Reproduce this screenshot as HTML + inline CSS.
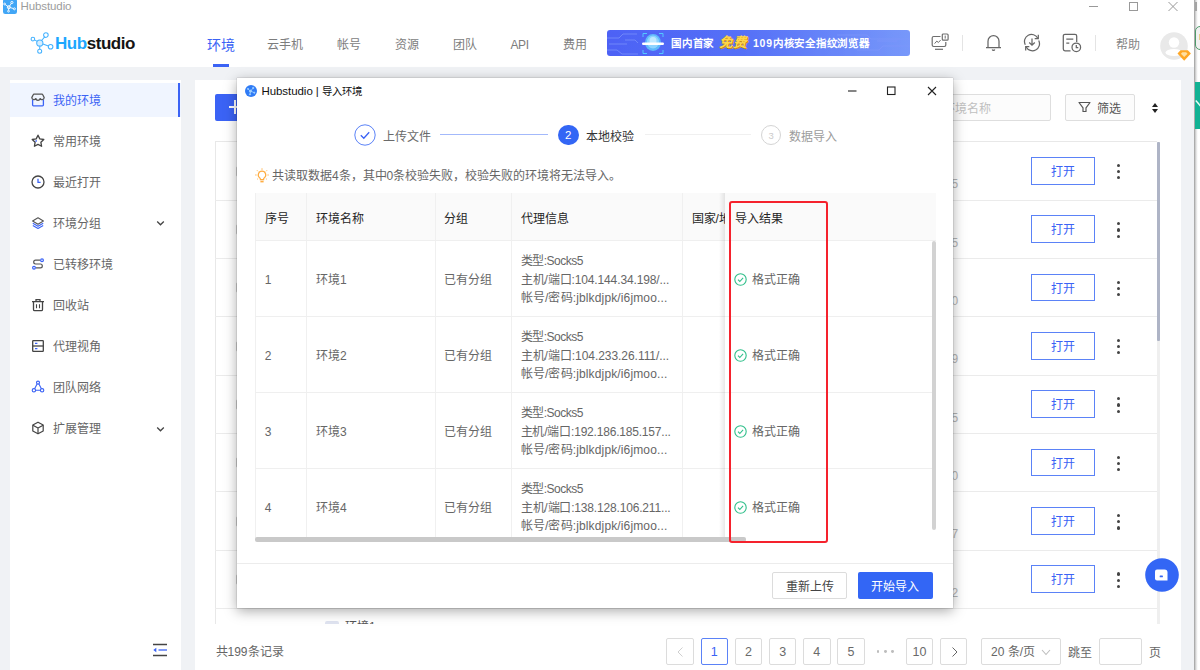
<!DOCTYPE html>
<html lang="zh-CN">
<head>
<meta charset="utf-8">
<title>Hubstudio</title>
<style>
*{box-sizing:border-box;margin:0;padding:0}
html,body{width:1200px;height:670px;overflow:hidden;background:#fff}
body{font-family:"Liberation Sans",sans-serif;font-size:12px;color:#333;position:relative}
.abs{position:absolute;white-space:nowrap}
#app{position:absolute;left:0;top:0;width:1194px;height:670px;background:#f0f2f5;overflow:hidden}
#titlebar{position:absolute;left:0;top:0;width:1194px;height:15px;background:#fff}
#header{position:absolute;left:0;top:15px;width:1194px;height:51.500px;background:#fff}
.nav{position:absolute;top:20.700px;font-size:12px;color:#7d7d7d;line-height:18px;white-space:nowrap}
.nav.on{color:#3b63f5}
#side{position:absolute;left:10px;top:80px;width:170.500px;height:590px;background:#fff}
.si{position:absolute;left:0;width:170.500px;height:34px}
.si span{position:absolute;left:43px;top:8.700px;font-size:12px;line-height:18px;color:#666;white-space:nowrap}
.si svg{position:absolute;left:20.500px;top:9.500px}
#main{position:absolute;left:195px;top:80px;width:986px;height:590px;background:#fff}
.row{position:absolute;left:215px;width:942px;height:1px;background:#ebebeb}
.open{position:absolute;left:1031px;width:64px;height:27.700px;border:1px solid #5b82f7;color:#3b63f5;font-size:12px;line-height:28.500px;text-align:center;background:#fff}
.dots{position:absolute;left:1117px;width:4px}
.dots i{display:block;width:3.200px;height:3.200px;border-radius:50%;background:#444;margin-bottom:3px}
.num{position:absolute;left:951.500px;font-size:12px;line-height:14px;color:#b4b4b4}
.pg{position:absolute;top:638.300px;width:27.500px;height:27px;border:1px solid #dcdcdc;border-radius:2px;background:#fff;font-size:12.500px;line-height:27px;text-align:center;color:#6a6a6a}
#dlg{position:absolute;left:237px;top:78px;width:716px;height:529.500px;background:#fff;box-shadow:0 3px 12px rgba(0,0,0,.34),0 0 1px rgba(0,0,0,.4)}
#dlg .t{position:absolute;white-space:nowrap;font-size:12px;line-height:18px;color:#666}
</style>
</head>
<body>
<div id="app">
<div id="titlebar">
<svg class="abs" style="left:2.700px;top:0" width="14" height="14" viewBox="0 0 14 14"><rect x="0" y="-1" width="14" height="15" rx="2.200" fill="#41a6f6"/><g stroke="#fff" stroke-width=".9" fill="none"><path d="M5.800 7.200L1.800 4.200M5.800 7.200L8.600 3M5.800 7.200L11 8.700M5.800 7.200L5.500 10.800"/></g><g fill="#41a6f6" stroke="#fff" stroke-width=".9"><circle cx="5.800" cy="7.200" r="1.500" fill="#a9d8fb"/><circle cx="1.600" cy="4" r=".9"/><circle cx="8.900" cy="2.500" r="1.100"/><circle cx="11.400" cy="8.800" r="1"/><circle cx="5.500" cy="11.200" r=".9"/></g></svg>
<div class="abs" style="left:20.500px;top:0;font-size:11.500px;line-height:13.500px;color:#9c9c9c;letter-spacing:-.1px">Hubstudio</div>
<svg class="abs" style="left:1086px;top:0" width="108" height="14" viewBox="0 0 108 14" fill="none" stroke="#999" stroke-width="1"><path d="M3 6.500h9"/><rect x="43.500" y="2.500" width="8" height="8"/><path d="M82.500 2l9 9M91.500 2l-9 9"/></svg>
</div>
<div id="header">
<svg class="abs" style="left:30px;top:17px" width="24" height="23" viewBox="0 0 24 23" fill="none" stroke="#45b2ff" stroke-width="1.050"><path d="M7.300 9.400L4.500 7.900M11.600 8.500L14.700 4.800M12.900 12L18.400 14M9.800 14.300L9.700 17.200"/><circle cx="9.800" cy="11" r="3.100" fill="#d6eeff"/><circle cx="2.900" cy="7.100" r="1.800"/><circle cx="15.900" cy="3.100" r="2.300"/><circle cx="20.600" cy="14.700" r="2.300"/><circle cx="9.700" cy="19.200" r="2"/></svg>
<div class="abs" style="left:55px;top:19px;font-size:17px;line-height:20px;font-weight:bold;letter-spacing:-0.45px;color:#151515"><span style="color:#1da7ff">Hub</span>studio</div>
<div class="nav on" style="left:207px;top:20.500px;font-size:14px">环境</div>
<div class="abs" style="left:213px;top:48.500px;width:16px;height:3px;background:#3b63f5"></div>
<div class="nav" style="left:267px">云手机</div>
<div class="nav" style="left:337px">帐号</div>
<div class="nav" style="left:395px">资源</div>
<div class="nav" style="left:453px">团队</div>
<div class="nav" style="left:510.500px;letter-spacing:-.4px">API</div>
<div class="nav" style="left:563px">费用</div>
<div id="banner" class="abs" style="left:607px;top:15px;width:302.500px;height:26px;border-radius:3px;background:linear-gradient(90deg,#4d62f6 0%,#5671f7 45%,#7898fa 100%);overflow:hidden">
<svg class="abs" style="left:0;top:0" width="303" height="26" viewBox="0 0 303 26" fill="none" stroke="#7f96fb" stroke-width="1" opacity=".7"><path d="M0 8h12l4-4h14M2 14h18M0 20h10l5 4h16M18 10h10l3 3M230 5h30l4 4h39M250 20h22l4-4h27M270 11h20"/></svg>
<svg class="abs" style="left:33px;top:2px" width="26" height="23" viewBox="0 0 26 23"><g fill="none" stroke="#53c8ff" stroke-width="1"><path d="M3 5V1.500h4M19 1.500h4V5M3 18v3.500h4M19 21.500h4V18"/></g><ellipse cx="13" cy="10.500" rx="8" ry="8.500" fill="#5fb9fb"/><ellipse cx="13" cy="10" rx="6" ry="6.500" fill="#8dd4ff"/><ellipse cx="13" cy="9" rx="3.500" ry="4" fill="#bfe9ff"/><rect x="2" y="10.500" width="22" height="2.500" rx="1.200" fill="#fff"/></svg>
<div class="abs" style="left:64px;top:5px;font-size:10.500px;line-height:16px;font-weight:bold;color:#fff;letter-spacing:0.8px">国内首家</div>
<div class="abs" style="left:112px;top:4px;font-size:13.500px;line-height:17px;font-weight:bold;font-style:italic;color:#ffd54a;letter-spacing:1px;text-shadow:1px 1px 0 #c98a12">免费</div>
<div class="abs" style="left:146px;top:5px;font-size:10.500px;line-height:16px;font-weight:bold;color:#fff;letter-spacing:0.75px">109内核安全指纹浏览器</div>
</div>
<svg class="abs" style="left:931px;top:18px" width="18" height="18" viewBox="0 0 18 18" fill="none" stroke="#6e6e6e" stroke-width="1.200"><path d="M9.500 3.500H2.600a1.400 1.400 0 0 0-1.400 1.400v7.200a1.400 1.400 0 0 0 1.400 1.400h10.800a1.400 1.400 0 0 0 1.400-1.400V9"/><path d="M4 16.300h8"/><path d="M3.600 10.600l2.200-2.500 1.600 1.400 2.200-2.400" stroke-width="1"/><rect x="11.300" y="1" width="5.800" height="6.200" rx="1"/><path d="M14.200 2.600v3" stroke-width="1"/></svg>
<div class="abs" style="left:962px;top:20px;width:1px;height:16px;background:#e4e4e4"></div>
<svg class="abs" style="left:985px;top:18px" width="17" height="19" viewBox="0 0 17 19" fill="none" stroke="#666" stroke-width="1.250"><path d="M1 14.500h15M3 14.500V8.200a5.500 5.500 0 0 1 11 0v6.300"/><path d="M7.200 16.600a1.400 1.400 0 0 0 2.600 0"/></svg>
<svg class="abs" style="left:1022px;top:18px" width="20" height="19" viewBox="0 0 20 19" fill="none" stroke="#666" stroke-width="1.250"><path d="M3.300 11.800A7 7 0 0 1 15.800 5.200M16.700 7.500A7 7 0 0 1 4.200 14"/><path d="M16.300 1.800v3.800h-3.600M3.700 17.500v-3.800h3.600"/><path d="M10 5.500v6.500M7.200 9.500L10 12.200l2.800-2.700"/></svg>
<svg class="abs" style="left:1062px;top:18px" width="20" height="20" viewBox="0 0 20 20" fill="none" stroke="#666" stroke-width="1.250"><path d="M8.500 17.800H3a1.700 1.700 0 0 1-1.700-1.700V3A1.700 1.700 0 0 1 3 1.300h10A1.700 1.700 0 0 1 14.700 3v6"/><path d="M4.300 6h7M4.300 10h3"/><circle cx="14.300" cy="14.300" r="4.300"/><path d="M14.300 12v2.500h2"/></svg>
<div class="abs" style="left:1095px;top:20px;width:1px;height:16px;background:#e4e4e4"></div>
<div class="nav" style="left:1116px;color:#858585">帮助</div>
<svg class="abs" style="left:1160px;top:17px" width="34" height="31" viewBox="0 0 34 31"><circle cx="14" cy="14" r="13.800" fill="#e9e9e9"/><circle cx="14" cy="10.500" r="5.200" fill="#fff"/><ellipse cx="14" cy="20.500" rx="8.500" ry="3.600" fill="#fff"/><path d="M20.500 18.200h7.400l3 3.300-6.700 7.200-6.700-7.200z" fill="#ffa726"/><path d="M22.300 20.200h3.800l1.400 1.500-3.300 3.300-3.300-3.300z" fill="#ffe0a3"/></svg>
</div>
<div id="side">
<div class="si" style="top:3.4px;background:#f0f5ff;"><svg width="14" height="14" viewBox="0 0 14 14" fill="none" stroke="#3b63f5" stroke-width="1.300"><path d="M1.600 6.500V12a.8.800 0 0 0 .8.800h9.200a.8.800 0 0 0 .8-.8V6.500"/><path d="M.8 4.600L2.200 1.800a1 1 0 0 1 .9-.6h7.800a1 1 0 0 1 .9.600l1.400 2.800a2.100 2.100 0 0 1-4.100.6 2.100 2.100 0 0 1-4.200 0 2.100 2.100 0 0 1-4.100-.6z" stroke="#555"/></svg><span style="color:#3b63f5">我的环境</span><i style="position:absolute;left:167.700px;top:0;width:2.200px;height:34px;background:#3b63f5"></i></div>
<div class="si" style="top:44.6px;"><svg width="14" height="14" viewBox="0 0 14 14" fill="none" stroke="#444" stroke-width="1.300" stroke-linejoin="round"><path d="M7 1.200l1.800 3.700 4 .6-2.900 2.800.7 4L7 10.400l-3.600 1.900.7-4L1.200 5.500l4-.6z"/><path d="M5.300 6.200l-.4 1.600" stroke="#3b63f5"/></svg><span style="">常用环境</span></div>
<div class="si" style="top:85.3px;"><svg width="14" height="14" viewBox="0 0 14 14" fill="none" stroke="#444" stroke-width="1.300"><circle cx="7" cy="7" r="6"/><path d="M7 3.800V7.400h2.600" stroke="#3b63f5"/></svg><span style="">最近打开</span></div>
<div class="si" style="top:126.1px;"><svg width="14" height="14" viewBox="0 0 14 14" fill="none" stroke="#3b63f5" stroke-width="1.100" stroke-linejoin="round"><path d="M7 1.800L1.600 5 7 8.200 12.400 5z" stroke="#555"/><path d="M1.800 7.300L7 10.300l5.200-3"/><path d="M1.800 9.400L7 12.400l5.200-3"/></svg><span style="">环境分组</span><svg style="left:146px;top:14px" width="9" height="7" viewBox="0 0 9 7" fill="none" stroke="#444" stroke-width="1.300"><path d="M1.200 1.500l3.300 3.300 3.300-3.300"/></svg></div>
<div class="si" style="top:167.1px;"><svg width="14" height="14" viewBox="0 0 14 14" fill="none" stroke="#555" stroke-width="1.200"><path d="M9 3.200H4.600a1.900 1.900 0 0 0 0 3.800h4.800a1.900 1.900 0 0 1 0 3.800H5"/><circle cx="11" cy="3.200" r="1.400" stroke="#3b63f5"/><circle cx="3" cy="10.800" r="1.400" stroke="#3b63f5"/></svg><span style="">已转移环境</span></div>
<div class="si" style="top:208.1px;"><svg width="14" height="14" viewBox="0 0 14 14" fill="none" stroke="#444" stroke-width="1.300"><path d="M1 3.600h12M5 3.400V1.700h4v1.700"/><path d="M2.500 3.800v7.700a1.200 1.200 0 0 0 1.200 1.200h6.600a1.200 1.200 0 0 0 1.200-1.200V3.800"/><path d="M5.500 6.200v4M8.500 6.200v4" stroke-width="1.100"/></svg><span style="">回收站</span></div>
<div class="si" style="top:249.4px;"><svg width="14" height="14" viewBox="0 0 14 14" fill="none" stroke="#444" stroke-width="1.300"><rect x="1.700" y="1.700" width="10.600" height="10.600" rx=".6"/><path d="M1.700 7h10.600"/><path d="M4 4.400h2.400M4 9.700h2.400" stroke="#3b63f5"/></svg><span style="">代理视角</span></div>
<div class="si" style="top:290.4px;"><svg width="14" height="14" viewBox="0 0 14 14" fill="none" stroke="#3b63f5" stroke-width="1.100"><path d="M7 2.200L2.800 10.200h8.400z" stroke-linejoin="round"/><circle cx="7" cy="2.600" r="1.500" fill="#fff"/><circle cx="2.900" cy="10.300" r="1.700" fill="#fff"/><circle cx="11.100" cy="10.300" r="1.700" fill="#fff"/></svg><span style="">团队网络</span></div>
<div class="si" style="top:331.6px;"><svg width="14" height="14" viewBox="0 0 14 14" fill="none" stroke="#444" stroke-width="1.200" stroke-linejoin="round"><path d="M7 1.200l5.200 2.900v5.800L7 12.800 1.800 9.900V4.100z"/><path d="M1.900 4.200L7 7l5.100-2.800M7 7v5.600"/></svg><span style="">扩展管理</span><svg style="left:146px;top:14px" width="9" height="7" viewBox="0 0 9 7" fill="none" stroke="#444" stroke-width="1.300"><path d="M1.200 1.500l3.300 3.300 3.300-3.300"/></svg></div>
<svg class="abs" style="left:141.500px;top:563.300px" width="16" height="14" viewBox="0 0 16 14" fill="none" stroke="#444" stroke-width="1.300"><path d="M1 1.500h14M1 12.500h14"/><path d="M6.500 7h8.500" stroke="#3b63f5"/><path d="M4.300 4.800v4.400L1.300 7z" fill="#3b63f5" stroke="none"/></svg>
</div>
<div id="main"></div>
<div id="mainc">
<div class="abs" style="left:215px;top:94px;width:60px;height:27px;border-radius:2px;background:#3b63f5"></div>
<div class="abs" style="left:228.500px;top:106px;width:13px;height:1.600px;background:#fff"></div><div class="abs" style="left:234.200px;top:99.500px;width:1.600px;height:14.500px;background:#fff"></div>
<div class="abs" style="left:900px;top:94px;width:151px;height:27px;border:1px solid #dedede;border-radius:2px;background:#fcfcfc"></div>
<div class="abs" style="left:943px;top:99.500px;font-size:12px;line-height:18px;color:#c0c0c0">环境名称</div>
<div class="abs" style="left:1065px;top:94px;width:69.500px;height:27px;border:1px solid #dedede;border-radius:2px;background:#fcfcfc"></div>
<svg class="abs" style="left:1078px;top:101px" width="13" height="12" viewBox="0 0 13 12" fill="none" stroke="#555" stroke-width="1.200" stroke-linejoin="round"><path d="M1 1.500h11L8 6.800v3.700H5V6.800z"/></svg>
<div class="abs" style="left:1097px;top:99.500px;font-size:12px;line-height:18px;color:#555">筛选</div>
<svg class="abs" style="left:1151.500px;top:102.500px" width="6" height="10" viewBox="0 0 6 10" fill="#222"><path d="M3 0L6 4H0zM3 10L0 6h6z"/></svg>
<div class="abs" style="left:215px;top:141.200px;width:942px;height:482.800px;border-left:1px solid #e8e8e8;border-top:1px solid #e8e8e8;overflow:hidden"></div>
<div class="row" style="top:199.5px"></div>
<div class="row" style="top:257.9px"></div>
<div class="row" style="top:316.2px"></div>
<div class="row" style="top:374.6px"></div>
<div class="row" style="top:432.9px"></div>
<div class="row" style="top:491.3px"></div>
<div class="row" style="top:549.6px"></div>
<div class="row" style="top:608.0px"></div>
<div class="open" style="top:157.0px">打开</div>
<div class="dots" style="top:163.9px"><i></i><i></i><i></i></div>
<div class="num" style="top:177.2px">5</div>
<div class="abs" style="left:236px;top:165.7px;width:11px;height:11px;border:1px solid #d0d0d0;border-radius:2px"></div>
<div class="open" style="top:215.3px">打开</div>
<div class="dots" style="top:222.2px"><i></i><i></i><i></i></div>
<div class="num" style="top:235.5px">5</div>
<div class="abs" style="left:236px;top:224.0px;width:11px;height:11px;border:1px solid #d0d0d0;border-radius:2px"></div>
<div class="open" style="top:273.7px">打开</div>
<div class="dots" style="top:280.6px"><i></i><i></i><i></i></div>
<div class="num" style="top:293.9px">0</div>
<div class="abs" style="left:236px;top:282.4px;width:11px;height:11px;border:1px solid #d0d0d0;border-radius:2px"></div>
<div class="open" style="top:332.1px">打开</div>
<div class="dots" style="top:338.9px"><i></i><i></i><i></i></div>
<div class="num" style="top:352.2px">9</div>
<div class="abs" style="left:236px;top:340.8px;width:11px;height:11px;border:1px solid #d0d0d0;border-radius:2px"></div>
<div class="open" style="top:390.4px">打开</div>
<div class="dots" style="top:397.3px"><i></i><i></i><i></i></div>
<div class="num" style="top:410.6px">5</div>
<div class="abs" style="left:236px;top:399.1px;width:11px;height:11px;border:1px solid #d0d0d0;border-radius:2px"></div>
<div class="open" style="top:448.8px">打开</div>
<div class="dots" style="top:455.6px"><i></i><i></i><i></i></div>
<div class="num" style="top:468.9px">0</div>
<div class="abs" style="left:236px;top:457.4px;width:11px;height:11px;border:1px solid #d0d0d0;border-radius:2px"></div>
<div class="open" style="top:507.1px">打开</div>
<div class="dots" style="top:514.0px"><i></i><i></i><i></i></div>
<div class="num" style="top:527.3px">7</div>
<div class="abs" style="left:236px;top:515.8px;width:11px;height:11px;border:1px solid #d0d0d0;border-radius:2px"></div>
<div class="open" style="top:565.4px">打开</div>
<div class="dots" style="top:572.4px"><i></i><i></i><i></i></div>
<div class="num" style="top:585.6px">2</div>
<div class="abs" style="left:236px;top:574.1px;width:11px;height:11px;border:1px solid #d0d0d0;border-radius:2px"></div>
<div class="abs" style="left:325px;top:620.500px;width:14px;height:3.500px;background:#dfe3f0;border-radius:2px 2px 0 0"></div>
<div class="abs" style="left:345px;top:620px;height:4px;overflow:hidden;font-size:12px;line-height:14px;color:#555">环境1</div>
<div class="abs" style="left:1157px;top:142px;width:3px;height:482px;background:#efefef"></div>
<div class="abs" style="left:1157.200px;top:142px;width:3px;height:198.500px;background:#aeb4c6;border-radius:1px"></div>
<svg class="abs" style="left:1145.300px;top:558px" width="34" height="34" viewBox="0 0 34 34"><circle cx="17" cy="17" r="16.800" fill="#3366f5"/><path d="M12 11.500h7.500a3 3 0 0 1 3 3v8h-10.500a2 2 0 0 1-2-2v-7a2 2 0 0 1 2-2z" fill="#fff"/><rect x="14.700" y="17.500" width="3.200" height="1.800" rx=".5" fill="#3366f5"/></svg>
<div class="abs" style="left:215.500px;top:642.500px;font-size:12px;line-height:18px;color:#666">共199条记录</div>
<div class="pg" style="left:666.3px"><svg style="position:absolute;left:9px;top:7px" width="9" height="12" viewBox="0 0 9 12" fill="none" stroke="#cfcfcf" stroke-width="1"><path d="M6.500 1.500L2 6l4.500 4.500"/></svg></div>
<div class="pg" style="left:700.5px;border-color:#5b82f7;color:#3b63f5">1</div>
<div class="pg" style="left:734.7px">2</div>
<div class="pg" style="left:768.9px">3</div>
<div class="pg" style="left:803.1px">4</div>
<div class="pg" style="left:837.3px">5</div>
<div class="abs" style="left:876.5px;top:650.300px;width:18px;height:3px"><i style="position:absolute;left:0;top:0;width:2.800px;height:2.800px;border-radius:50%;background:#bdbdbd"></i><i style="position:absolute;left:7.300px;top:0;width:2.800px;height:2.800px;border-radius:50%;background:#bdbdbd"></i><i style="position:absolute;left:14.600px;top:0;width:2.800px;height:2.800px;border-radius:50%;background:#bdbdbd"></i></div>
<div class="pg" style="left:905.7px">10</div>
<div class="pg" style="left:939.9px"><svg style="position:absolute;left:9px;top:7px" width="9" height="12" viewBox="0 0 9 12" fill="none" stroke="#666" stroke-width="1"><path d="M2.500 1.500L7 6l-4.500 4.500"/></svg></div>
<div class="pg" style="left:981px;width:80px;text-align:left;padding-left:9px;color:#666;font-size:12px">20 条/页</div>
<svg class="abs" style="left:1041px;top:649px" width="10" height="7" viewBox="0 0 10 7" fill="none" stroke="#bdbdbd" stroke-width="1.100"><path d="M1 1l4 4.500L9 1"/></svg>
<div class="abs" style="left:1068px;top:643.500px;font-size:12px;line-height:18px;color:#666">跳至</div>
<div class="pg" style="left:1099px;width:42.500px"></div>
<div class="abs" style="left:1148.500px;top:643.500px;font-size:12px;line-height:18px;color:#666">页</div>
</div>
</div>
<div class="abs" style="left:1194px;top:0;width:6px;height:670px;background:linear-gradient(90deg,#9a9a9a 0,#cfcfcf 1.500px,#f4f4f4 3px,#fff 4px)"></div>
<div class="abs" style="left:1195px;top:81.500px;width:5px;height:47px;background:#12b294"></div>
<svg class="abs" style="left:1195px;top:96px" width="5" height="16" viewBox="0 0 5 16" fill="none" stroke="#eafff9" stroke-width="1.400"><path d="M.8 4.500L5.500 10"/></svg>
<div class="abs" style="left:1195px;top:26px;width:8px;height:24px;border:1px solid #4e9a6a;border-radius:5px 0 0 5px;background:#f1f1f1"></div>
<div class="abs" style="left:1198.500px;top:34px;width:1.500px;height:6px;background:#e6cf8a"></div>
<div class="abs" style="left:1195px;top:2px;width:2px;height:8.500px;background:#a4a4a4"></div>
<div id="dlg">
<svg class="abs" style="left:7.5px;top:6.8px" width="12" height="12" viewBox="0 0 12 12"><circle cx="6" cy="6" r="6" fill="#2f7bf6"/><g stroke="#9fd0ff" stroke-width=".8" fill="#9fd0ff"><path d="M5.500 6.200L3 4M5.500 6.200L8 3.200M5.500 6.200L9.200 7.600M5.500 6.200L5 9.300" fill="none"/><circle cx="5.500" cy="6.200" r="1.100"/><circle cx="3" cy="3.900" r=".6"/><circle cx="8.200" cy="3" r=".7"/><circle cx="9.300" cy="7.700" r=".6"/><circle cx="5" cy="9.400" r=".6"/></g></svg>
<div class="t" style="left:24.4px;top:4.3px;font-size:11.500px;color:#111;letter-spacing:-.05px">Hubstudio | <span style="font-size:10.400px;letter-spacing:0">导入环境</span></div>
<svg class="abs" style="left:609px;top:7px" width="92" height="12" viewBox="0 0 92 12" fill="none" stroke="#222" stroke-width="1.100"><path d="M2 6h8.500"/><rect x="41.500" y="2" width="7.500" height="7.500"/><path d="M82 2l8 8M90 2l-8 8"/></svg>
<svg class="abs" style="left:116.8px;top:45.5px" width="22" height="22" viewBox="0 0 22 22" fill="none" stroke="#5b82f7"><circle cx="11" cy="11" r="10.200" stroke-width="1"/><path d="M6.800 11.300l3 3 5.400-6" stroke-width="1.300" stroke="#3b63f5"/></svg>
<div class="t" style="left:145.8px;top:49.5px;color:#6a6a6a">上传文件</div>
<div class="abs" style="left:203px;top:55.8px;width:108px;height:1.600px;background:#a3b9fb"></div>
<div class="abs" style="left:321px;top:46.5px;width:20.600px;height:20.600px;border-radius:50%;background:#3366f5;color:#fff;font-size:11.500px;line-height:21px;text-align:center">2</div>
<div class="t" style="left:348.5px;top:49.5px;color:#333">本地校验</div>
<div class="abs" style="left:407.5px;top:56.2px;width:106px;height:1px;background:#f0f0f0"></div>
<div class="abs" style="left:524px;top:46.8px;width:20.400px;height:20.400px;border-radius:50%;border:1px solid #d4d4d4;color:#cbcbcb;font-size:9.500px;line-height:19px;text-align:center">3</div>
<div class="t" style="left:551.6px;top:49.5px;color:#9c9c9c">数据导入</div>
<svg class="abs" style="left:18px;top:89.8px" width="14" height="16" viewBox="0 0 14 16" fill="none" stroke="#ffad42" stroke-width="1.200"><path d="M7 3.200a3.700 3.700 0 0 0-2.200 6.700c.4.400.6.800.6 1.300v.5h3.200v-.5c0-.5.200-.9.600-1.300A3.700 3.700 0 0 0 7 3.200z"/><path d="M5.400 13.600h3.200" stroke-width="1.600"/><path d="M7 .3v1.500M2 2.300l1 1M12 2.300l-1 1M.2 7h1.400M12.400 7h1.400M2.200 11.300l.9-.8M11.800 11.300l-.9-.8" stroke-width=".9"/></svg>
<div class="t" style="left:35.2px;top:89.1px;color:#666;letter-spacing:-.03px">共读取数据4条，其中0条校验失败，校验失败的环境将无法导入。</div>
<div class="abs" style="left:18.3px;top:115px;width:680.7px;height:47.600px;background:#fafafa"></div>
<div class="abs" style="left:69.2px;top:115px;width:1px;height:345px;background:#f0f0f0"></div>
<div class="abs" style="left:197.5px;top:115px;width:1px;height:345px;background:#f0f0f0"></div>
<div class="abs" style="left:274.2px;top:115px;width:1px;height:345px;background:#f0f0f0"></div>
<div class="abs" style="left:444.7px;top:115px;width:1px;height:345px;background:#f0f0f0"></div>
<div class="abs" style="left:18.3px;top:115px;width:1px;height:345px;background:#f0f0f0"></div>
<div class="abs" style="left:18.3px;top:162.1px;width:680.7px;height:1px;background:#efefef"></div>
<div class="abs" style="left:18.3px;top:237.5px;width:680.7px;height:1px;background:#efefef"></div>
<div class="abs" style="left:18.3px;top:313.8px;width:680.7px;height:1px;background:#efefef"></div>
<div class="abs" style="left:18.3px;top:389.9px;width:680.7px;height:1px;background:#efefef"></div>
<div class="t" style="left:27.7px;top:131.5px;color:#262626">序号</div>
<div class="t" style="left:79px;top:131.5px;color:#262626">环境名称</div>
<div class="t" style="left:207.3px;top:131.5px;color:#262626">分组</div>
<div class="t" style="left:284px;top:131.5px;color:#262626">代理信息</div>
<div class="t" style="left:454.6px;top:131.5px;color:#262626;width:34px;overflow:hidden">国家/地区</div>
<div class="t" style="left:27.7px;top:192.8px">1</div>
<div class="t" style="left:79px;top:192.8px">环境1</div>
<div class="t" style="left:207.3px;top:192.8px">已有分组</div>
<div class="t" style="left:283.7px;top:173.7px;letter-spacing:-.5px">类型:Socks5</div>
<div class="t" style="left:283.7px;top:192.8px;letter-spacing:-0.12px">主机/端口:104.144.34.198/...</div>
<div class="t" style="left:283.7px;top:211.3px;letter-spacing:.14px">帐号/密码:jblkdjpk/i6jmoo...</div>
<div class="t" style="left:27.7px;top:268.7px">2</div>
<div class="t" style="left:79px;top:268.7px">环境2</div>
<div class="t" style="left:207.3px;top:268.7px">已有分组</div>
<div class="t" style="left:283.7px;top:249.6px;letter-spacing:-.5px">类型:Socks5</div>
<div class="t" style="left:283.7px;top:268.7px;letter-spacing:-0.05px">主机/端口:104.233.26.111/...</div>
<div class="t" style="left:283.7px;top:287.2px;letter-spacing:.14px">帐号/密码:jblkdjpk/i6jmoo...</div>
<div class="t" style="left:27.7px;top:344.8px">3</div>
<div class="t" style="left:79px;top:344.8px">环境3</div>
<div class="t" style="left:207.3px;top:344.8px">已有分组</div>
<div class="t" style="left:283.7px;top:325.7px;letter-spacing:-.5px">类型:Socks5</div>
<div class="t" style="left:283.7px;top:344.8px;letter-spacing:-0.2px">主机/端口:192.186.185.157...</div>
<div class="t" style="left:283.7px;top:363.3px;letter-spacing:.14px">帐号/密码:jblkdjpk/i6jmoo...</div>
<div class="t" style="left:27.7px;top:420.9px">4</div>
<div class="t" style="left:79px;top:420.9px">环境4</div>
<div class="t" style="left:207.3px;top:420.9px">已有分组</div>
<div class="t" style="left:283.7px;top:401.8px;letter-spacing:-.5px">类型:Socks5</div>
<div class="t" style="left:283.7px;top:420.9px;letter-spacing:-0.17px">主机/端口:138.128.106.211...</div>
<div class="t" style="left:283.7px;top:439.4px;letter-spacing:.14px">帐号/密码:jblkdjpk/i6jmoo...</div>
<div class="abs" style="left:482.4px;top:115px;width:6px;height:344.500px;background:linear-gradient(90deg,rgba(0,0,0,0),rgba(0,0,0,.09))"></div>
<div class="abs" style="left:488.4px;top:115px;width:210.6px;height:344.500px;background:#fff"></div>
<div class="abs" style="left:488.4px;top:115px;width:210.6px;height:47.600px;background:#fafafa"></div>
<div class="abs" style="left:488.4px;top:162.1px;width:210.6px;height:1px;background:#efefef"></div>
<div class="abs" style="left:488.4px;top:237.5px;width:210.6px;height:1px;background:#efefef"></div>
<div class="abs" style="left:488.4px;top:313.8px;width:210.6px;height:1px;background:#efefef"></div>
<div class="abs" style="left:488.4px;top:389.9px;width:210.6px;height:1px;background:#efefef"></div>
<div class="t" style="left:497.6px;top:131.5px;color:#262626">导入结果</div>
<svg class="abs" style="left:497.4px;top:195.2px" width="13" height="13" viewBox="0 0 13 13" fill="none" stroke="#2fbf8a" stroke-width="1.100"><circle cx="6.500" cy="6.500" r="5.700"/><path d="M4 6.700l1.800 1.800 3.300-3.600"/></svg>
<div class="t" style="left:514.5px;top:192.8px">格式正确</div>
<svg class="abs" style="left:497.4px;top:271.1px" width="13" height="13" viewBox="0 0 13 13" fill="none" stroke="#2fbf8a" stroke-width="1.100"><circle cx="6.500" cy="6.500" r="5.700"/><path d="M4 6.700l1.800 1.800 3.300-3.600"/></svg>
<div class="t" style="left:514.5px;top:268.7px">格式正确</div>
<svg class="abs" style="left:497.4px;top:347.2px" width="13" height="13" viewBox="0 0 13 13" fill="none" stroke="#2fbf8a" stroke-width="1.100"><circle cx="6.500" cy="6.500" r="5.700"/><path d="M4 6.700l1.800 1.800 3.300-3.600"/></svg>
<div class="t" style="left:514.5px;top:344.8px">格式正确</div>
<svg class="abs" style="left:497.4px;top:423.3px" width="13" height="13" viewBox="0 0 13 13" fill="none" stroke="#2fbf8a" stroke-width="1.100"><circle cx="6.500" cy="6.500" r="5.700"/><path d="M4 6.700l1.800 1.800 3.300-3.600"/></svg>
<div class="t" style="left:514.5px;top:420.9px">格式正确</div>
<div class="abs" style="left:695px;top:162.6px;width:3.700px;height:289px;background:#d2d2d2;border-radius:2px"></div>
<div class="abs" style="left:18.3px;top:459.5px;width:680.7px;height:5px;background:#fff"></div>
<div class="abs" style="left:18.3px;top:459.4px;width:490.4px;height:4.300px;background:#c9c9c9;border-radius:2px"></div>
<div class="abs" style="left:491.5px;top:123.3px;width:99px;height:341.500px;border:2px solid #f5222d;border-radius:3px"></div>
<div class="abs" style="left:0;top:485px;width:716px;height:1px;background:#ececec"></div>
<div class="abs" style="left:535.3px;top:494.3px;width:75px;height:27px;border:1px solid #dcdcdc;border-radius:2px;font-size:12px;line-height:29px;text-align:center;color:#444">重新上传</div>
<div class="abs" style="left:620.7px;top:494.3px;width:75px;height:27px;border-radius:2px;background:#3366f5;font-size:12px;line-height:31px;text-align:center;color:#fff">开始导入</div>
</div>
</body>
</html>
